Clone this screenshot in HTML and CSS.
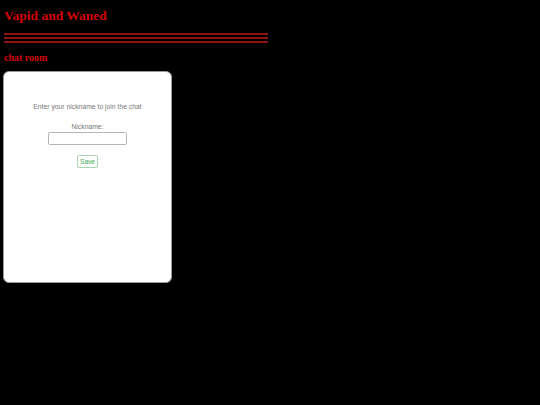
FILE: index.html
```html
<!DOCTYPE html>
<html>
<head>
<meta charset="utf-8">
<link rel="stylesheet" href="styles.css">
</head>
<body>
<h1 class="title">Vapid and Waned</h1>
<div class="rules">
  <div class="rule"></div>
  <div class="rule"></div>
  <div class="rule"></div>
</div>
<h2 class="subtitle">chat room</h2>
<div class="chatbox">
  <p class="intro">Enter your nickname to join the chat</p>
  <label class="label" for="nick">Nickname:</label>
  <input class="nick" id="nick" type="text">
  <button class="save">Save</button>
</div>
</body>
</html>
```
FILE: styles.css
```css
html, body {
  background: #000;
}
body {
  margin: 0;
  padding: 0 3px;
  font-family: "Liberation Serif", "Times New Roman", serif;
}
.title {
  margin: 8px 0 0 1px;
  font-size: 13.5px;
  line-height: 16px;
  color: #d40000;
  font-weight: bold;
}
.rules {
  margin: 9px 0 0 1px;
  width: 264px;
  display: flex;
  flex-direction: column;
  gap: 2px;
}
.rule {
  height: 2px;
  background: #8e1212;
}
.subtitle {
  margin: 9px 0 0 1px;
  font-size: 10px;
  line-height: 12px;
  color: #d40000;
  font-weight: bold;
}
.chatbox {
  margin-top: 7px;
  width: 167px;
  height: 210px;
  background: #fff;
  border: 1px solid #9a9a9a;
  border-radius: 6px;
  display: flex;
  flex-direction: column;
  align-items: center;
  font-family: "Liberation Sans", Arial, sans-serif;
  color: #777;
  font-size: 6.8px;
}
.intro {
  margin: 30px 0 0;
  line-height: 9px;
}
.label {
  margin-top: 11px;
  line-height: 9px;
}
.nick {
  margin-top: 1px;
  width: 79px;
  height: 13px;
  box-sizing: border-box;
  border: 1px solid #b5b5b5;
  border-radius: 2px;
  padding: 0;
}
.save {
  margin-top: 10px;
  width: 21px;
  height: 13px;
  box-sizing: border-box;
  padding: 0;
  background: #fff;
  border: 1px solid #a8d4b0;
  border-radius: 2px;
  color: #3aa655;
  font-family: "Liberation Sans", Arial, sans-serif;
  font-size: 6.5px;
}
```
